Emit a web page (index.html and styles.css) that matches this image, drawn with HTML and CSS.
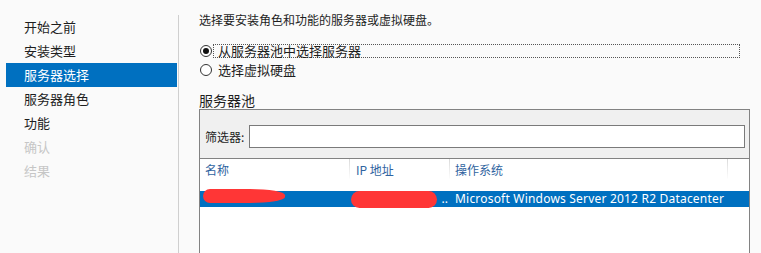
FILE: index.html
```html
<!DOCTYPE html>
<html lang="zh-CN">
<head>
  <meta charset="UTF-8" />
  <title>添加角色和功能向导</title>
  <link rel="stylesheet" href="styles.css">
</head>
<body>
  <div class="wizard">
    <ul class="steps">
      <li>开始之前</li>
      <li>安装类型</li>
      <li class="active">服务器选择</li>
      <li>服务器角色</li>
      <li>功能</li>
      <li class="disabled">确认</li>
      <li class="disabled">结果</li>
    </ul>

    <div class="content">
      <p class="intro">选择要安装角色和功能的服务器或虚拟硬盘。</p>

      <div class="choices">
        <div class="choice">
          <span class="radio checked"></span>
          <span class="choice-text focused">从服务器池中选择服务器</span>
        </div>
        <div class="choice">
          <span class="radio"></span>
          <span class="choice-text">选择虚拟硬盘</span>
        </div>
      </div>

      <h2 class="pool-title">服务器池</h2>

      <div class="pool">
        <div class="filter">
          <span class="filter-label">筛选器:</span>
          <div class="filter-box"></div>
        </div>

        <div class="grid-head">
          <div class="cell c-name">名称</div>
          <div class="cell c-ip">IP 地址</div>
          <div class="cell c-os">操作系统</div>
          <div class="cell c-rest"></div>
        </div>

        <div class="grid-row selected">
          <div class="cell c-name"><span class="redact redact-name"></span></div>
          <div class="cell c-ip"><span class="dots">..</span><span class="redact redact-ip"></span></div>
          <div class="cell c-os">Microsoft Windows Server 2012 R2 Datacenter</div>
        </div>
      </div>
    </div>
  </div>
</body>
</html>
```

FILE: styles.css
```css
html, body {
  margin: 0;
  height: 100%;
}

body {
  background: #fafafa;
  color: #1e1e1e;
  font-family: "Noto Sans CJK SC", "Noto Sans", sans-serif;
  overflow: hidden;
}

.wizard {
  display: flex;
  height: 253px;
}

/* left step list */
.steps {
  list-style: none;
  margin: 15px 0 0 6px;
  padding: 0;
  width: 172px;
  border-right: 1px solid #cfcfcf;
  flex: none;
}

.steps li {
  height: 24px;
  line-height: 24px;
  padding-left: 18px;
  margin-right: 1px;
  font-size: 13px;
  color: #1e1e1e;
}

.steps li.active {
  background: #0070c0;
  color: #fff;
}

.steps li.disabled {
  color: #c6c6c6;
}

/* right side */
.content {
  flex: 1;
  display: flex;
  flex-direction: column;
  padding: 12px 11px 0 20px;
}

.intro {
  margin: 0;
  font-size: 12px;
  line-height: 16px;
}

.choices {
  margin-top: 13px;
}

.choice {
  display: flex;
  align-items: center;
  height: 19px;
  padding-right: 10px;
}

.radio {
  width: 10px;
  height: 10px;
  margin-left: 1px;
  border: 1px solid #333;
  border-radius: 50%;
  background: #fff;
  position: relative;
  flex: none;
}

.radio.checked::after {
  content: "";
  position: absolute;
  left: 2px;
  top: 2px;
  width: 6px;
  height: 6px;
  border-radius: 50%;
  background: #111;
}

.choice-text {
  margin-left: 1px;
  padding: 0 4px;
  font-size: 13px;
  line-height: 12px;
  border: 1px dotted transparent;
}

.choice-text.focused {
  flex: 1;
  border-color: #555;
}

.pool-title {
  margin: 12px 0 0;
  font-size: 14px;
  font-weight: normal;
  line-height: 18px;
}

.pool {
  flex: 1;
  border: 1px solid #828282;
  border-bottom: none;
  background: #fff;
}

.filter {
  display: flex;
  align-items: center;
  height: 23px;
  padding: 15px 4px 10px 5px;
  background: #f0f0f0;
  border-bottom: 1px solid #828282;
}

.filter-label {
  font-size: 12px;
  width: 44px;
  flex: none;
}

.filter-box {
  flex: 1;
  height: 21px;
  border: 1px solid #7a7a7a;
  background: #fff;
}

.grid-head,
.grid-row {
  display: flex;
}

.grid-head {
  height: 20px;
  line-height: 22px;
  font-size: 12px;
  color: #2f64a0;
}

.grid-head .cell {
  border-right: 1px solid;
  border-image: linear-gradient(to bottom, #d8d8d8, #ffffff) 1;
}

.cell {
  box-sizing: border-box;
  white-space: nowrap;
  overflow: visible;
  position: relative;
}

.c-name { width: 150px; padding-left: 5px; }
.c-ip { width: 100px; padding-left: 6px; }
.c-os { width: 278px; padding-left: 5px; }
.c-rest { width: 21px; border-right: none !important; }

.grid-row {
  margin-top: 12px;
  height: 16px;
  line-height: 16px;
  font-family: "Noto Sans", sans-serif;
  font-size: 12px;
}

.grid-row .c-os {
  letter-spacing: 0.2px;
}

.grid-row.selected {
  background: #0070c0;
  color: #fff;
}

.dots {
  position: absolute;
  right: 2px;
  top: 0;
}

/* red scribbles over the hidden names */
.redact {
  position: absolute;
  background: #ff3636;
}

.redact-name {
  left: 3px;
  top: -2px;
  width: 82px;
  height: 14px;
  border-radius: 8px 40px 40px 8px / 8px 7px 7px 8px;
}

.redact-ip {
  left: 1px;
  top: 0;
  width: 86px;
  height: 17px;
  border-radius: 9px;
}
```
